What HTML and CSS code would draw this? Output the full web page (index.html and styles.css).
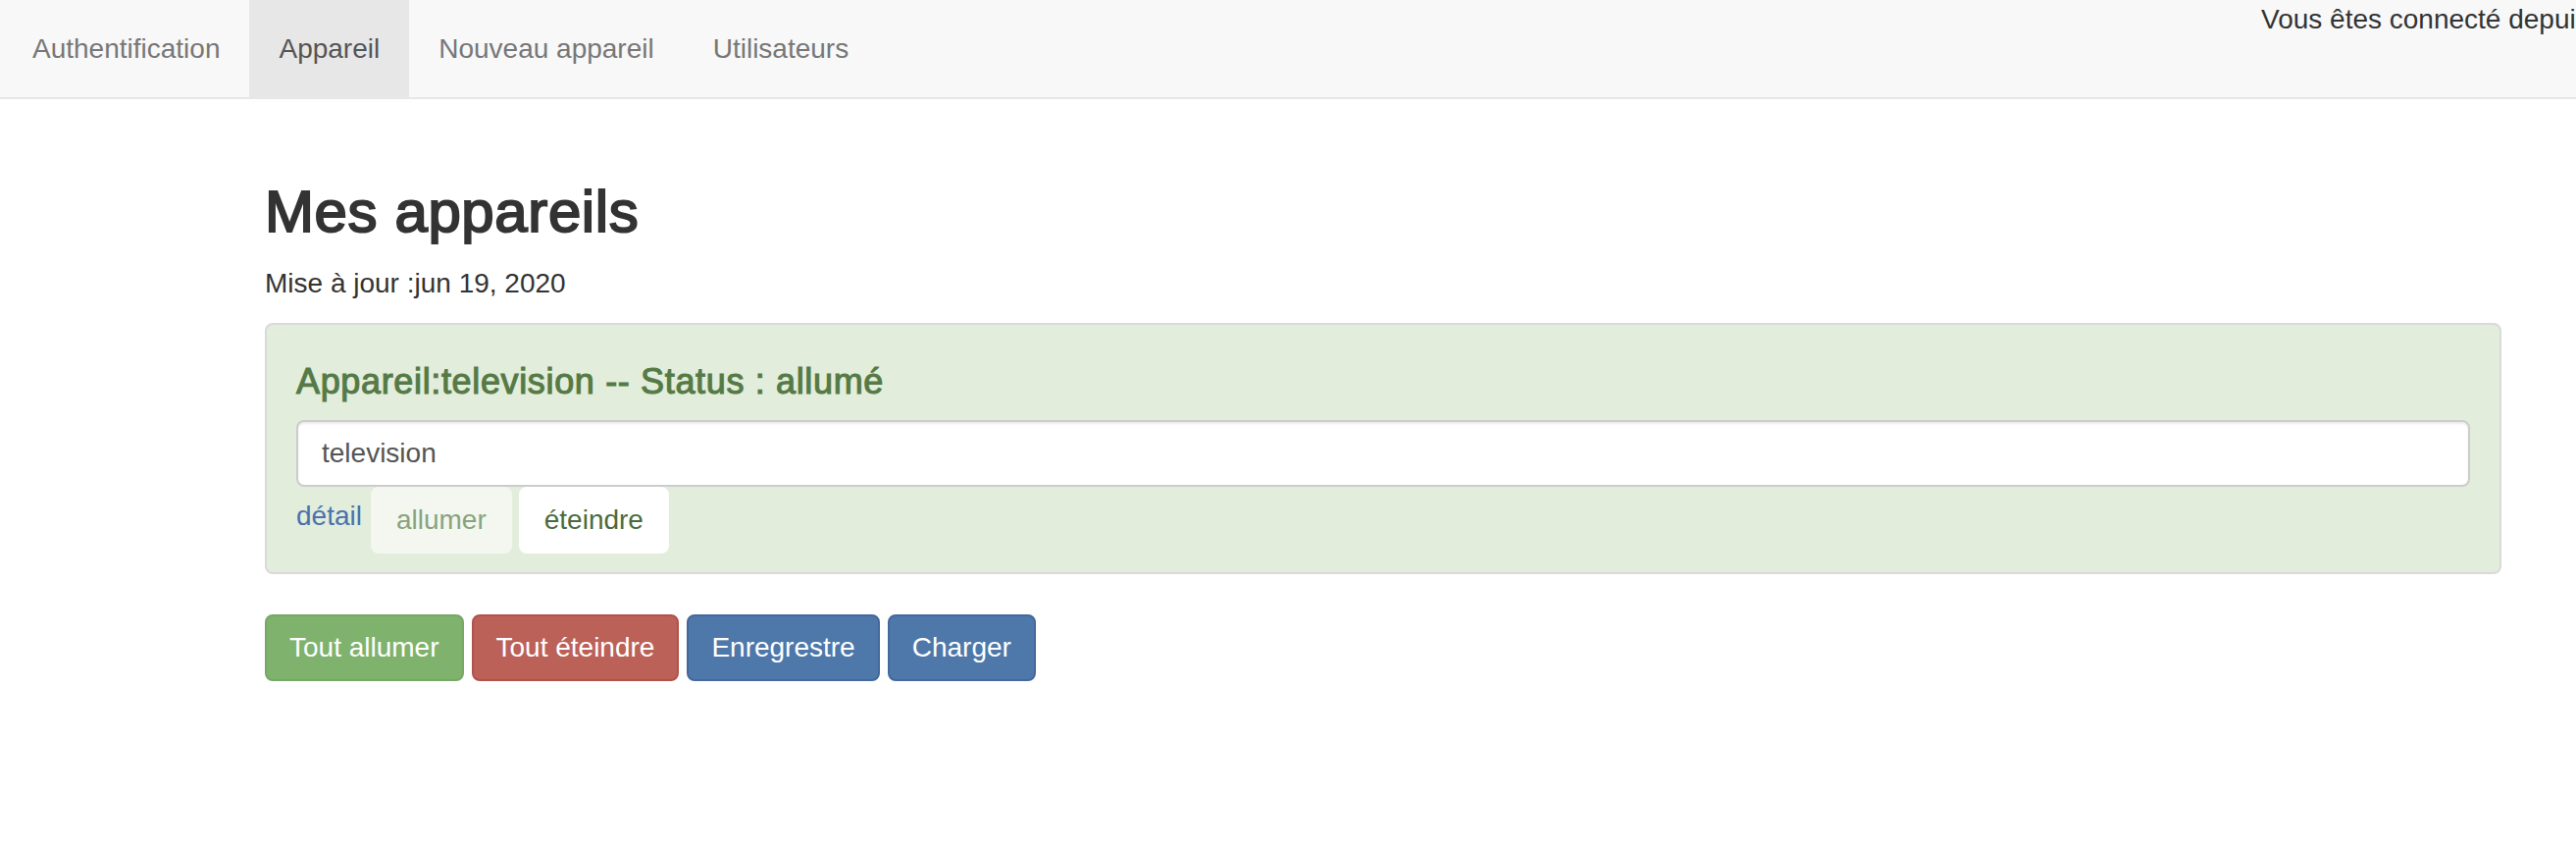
FILE: index.html
```html
<!DOCTYPE html>
<html lang="fr">
<head>
<meta charset="utf-8">
<title>Mes appareils</title>
<link rel="stylesheet" href="styles.css">
</head>
<body>
<nav class="navbar">
  <ul class="nav">
    <li><a class="nav-link" href="#">Authentification</a></li>
    <li><a class="nav-link active" href="#">Appareil</a></li>
    <li><a class="nav-link" href="#">Nouveau appareil</a></li>
    <li><a class="nav-link" href="#">Utilisateurs</a></li>
  </ul>
  <p class="navbar-text">Vous êtes connecté depuis</p>
</nav>
<main class="container">
  <h2 class="title">Mes appareils</h2>
  <p class="updated">Mise à jour :jun 19, 2020</p>
  <ul class="list-group">
    <li class="list-group-item">
      <h4 class="item-heading">Appareil:television -- Status : allumé</h4>
      <input class="form-control" type="text" value="television">
      <div class="item-actions">
        <a class="detail-link" href="#">détail</a>
        <button class="btn btn-light" disabled>allumer</button>
        <button class="btn btn-white">éteindre</button>
      </div>
    </li>
  </ul>
  <div class="actions">
    <button class="btn btn-success">Tout allumer</button>
    <button class="btn btn-danger">Tout éteindre</button>
    <button class="btn btn-primary">Enregrestre</button>
    <button class="btn btn-primary">Charger</button>
  </div>
</main>
</body>
</html>
```
FILE: styles.css
```css
html, body {
  margin: 0;
  padding: 0;
  overflow: hidden;
  background: #ffffff;
}
body {
  font-family: "Liberation Sans", Arial, Helvetica, sans-serif;
  font-size: 28px;
  line-height: 40px;
  color: #333333;
}
.navbar {
  display: flex;
  height: 99px;
  background: #f8f8f8;
  border-bottom: 2px solid #e7e7e7;
  margin-bottom: 40px;
  padding-left: 3px;
}
.nav {
  display: flex;
  list-style: none;
  margin: 0;
  padding: 0;
}
.nav-link {
  display: block;
  padding: 30px 30px 29px;
  color: #777777;
  text-decoration: none;
}
.nav-link.active {
  background: #e7e7e7;
  color: #555555;
}
.navbar-text {
  margin: 0 0 0 auto;
  align-self: flex-start;
  width: 321px;
  flex-shrink: 0;
  white-space: nowrap;
  overflow: hidden;
  color: #333333;
}
.container {
  display: flow-root;
  width: 2280px;
  margin: 0 0 0 270px;
}
.title {
  font-size: 60px;
  line-height: 66px;
  font-weight: 400;
  letter-spacing: 0.6px;
  -webkit-text-stroke: 2px #333333;
  margin: 42px 0 20px;
  color: #333333;
}
.updated {
  margin: 0 0 20px;
}
.list-group {
  list-style: none;
  margin: 0 0 41px;
  padding: 0;
}
.list-group-item {
  background: #e2eddc;
  border: 2px solid #dadada;
  border-radius: 8px;
  padding: 18px 30px 19px;
}
.item-heading {
  font-size: 36px;
  line-height: 40px;
  font-weight: 400;
  letter-spacing: 0.65px;
  -webkit-text-stroke: 1.1px #557a46;
  color: #557a46;
  margin: 20px 0 19px;
}
.form-control {
  display: block;
  box-sizing: border-box;
  width: 100%;
  height: 68px;
  padding: 12px 24px;
  font-family: inherit;
  font-size: 28px;
  line-height: 40px;
  color: #555555;
  background: #ffffff;
  border: 2px solid #cccccc;
  border-radius: 8px;
  box-shadow: inset 0 2px 2px rgba(0, 0, 0, 0.075);
  margin: 0;
}
.item-actions {
  display: flex;
  align-items: flex-start;
  gap: 7px;
}
.detail-link {
  color: #4a72ad;
  text-decoration: none;
  padding-top: 10px;
  margin-right: 2px;
}
.btn {
  box-sizing: border-box;
  height: 68px;
  padding: 12px 24px;
  font-family: inherit;
  font-size: 28px;
  line-height: 40px;
  border: 2px solid transparent;
  border-radius: 8px;
  cursor: pointer;
  white-space: nowrap;
}
.btn-light {
  background: #f3f7f0;
  border-color: #f3f7f0;
  color: #89a37d;
}
.btn-white {
  background: #ffffff;
  border-color: #ffffff;
  color: #4a6b3e;
}
.actions {
  display: flex;
  gap: 8px;
}
.actions .btn {
  padding: 12px 23px;
  color: #ffffff;
}
.btn-success {
  background: #7fb26d;
  border-color: #76a866;
}
.btn-danger {
  background: #bc6158;
  border-color: #b0524b;
}
.btn-primary {
  background: #4e78aa;
  border-color: #44699a;
}
```
